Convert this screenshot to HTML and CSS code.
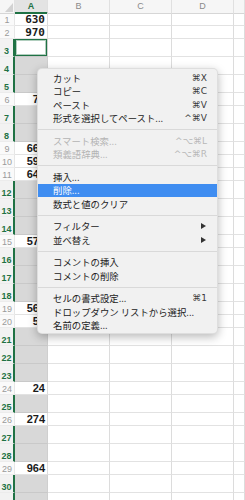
FILE: index.html
```html
<!DOCTYPE html>
<html>
<head>
    <meta charset="utf-8">
    <title>Sheet context menu</title>
    <link rel="stylesheet" href="styles.css">
</head>
<body>
    <div class="sheet">
        <div class="row head">
            <div class="corner"><span class="tri"></span></div>
            <div class="col cur">A</div>
            <div class="col">B</div>
            <div class="col">C</div>
            <div class="col">D</div>
            <div class="col"></div>
        </div>
        <div class="row"><div class="num">1</div><div class="cell mono">630</div><div class="cell"></div><div class="cell"></div><div class="cell"></div><div class="cell"></div></div>
        <div class="row"><div class="num">2</div><div class="cell mono">970</div><div class="cell"></div><div class="cell"></div><div class="cell"></div><div class="cell"></div></div>
        <div class="row sel"><div class="num">3</div><div class="cell active"></div><div class="cell"></div><div class="cell"></div><div class="cell"></div><div class="cell"></div></div>
        <div class="row sel"><div class="num">4</div><div class="cell"></div><div class="cell"></div><div class="cell"></div><div class="cell"></div><div class="cell"></div></div>
        <div class="row sel"><div class="num">5</div><div class="cell"></div><div class="cell"></div><div class="cell"></div><div class="cell"></div><div class="cell"></div></div>
        <div class="row"><div class="num">6</div><div class="cell">73</div><div class="cell"></div><div class="cell"></div><div class="cell"></div><div class="cell"></div></div>
        <div class="row sel"><div class="num">7</div><div class="cell"></div><div class="cell"></div><div class="cell"></div><div class="cell"></div><div class="cell"></div></div>
        <div class="row sel"><div class="num">8</div><div class="cell"></div><div class="cell"></div><div class="cell"></div><div class="cell"></div><div class="cell"></div></div>
        <div class="row"><div class="num">9</div><div class="cell">662</div><div class="cell"></div><div class="cell"></div><div class="cell"></div><div class="cell"></div></div>
        <div class="row"><div class="num">10</div><div class="cell">591</div><div class="cell"></div><div class="cell"></div><div class="cell"></div><div class="cell"></div></div>
        <div class="row"><div class="num">11</div><div class="cell">648</div><div class="cell"></div><div class="cell"></div><div class="cell"></div><div class="cell"></div></div>
        <div class="row sel"><div class="num">12</div><div class="cell"></div><div class="cell"></div><div class="cell"></div><div class="cell"></div><div class="cell"></div></div>
        <div class="row sel"><div class="num">13</div><div class="cell"></div><div class="cell"></div><div class="cell"></div><div class="cell"></div><div class="cell"></div></div>
        <div class="row sel"><div class="num">14</div><div class="cell"></div><div class="cell"></div><div class="cell"></div><div class="cell"></div><div class="cell"></div></div>
        <div class="row"><div class="num">15</div><div class="cell">578</div><div class="cell"></div><div class="cell"></div><div class="cell"></div><div class="cell"></div></div>
        <div class="row sel"><div class="num">16</div><div class="cell"></div><div class="cell"></div><div class="cell"></div><div class="cell"></div><div class="cell"></div></div>
        <div class="row sel"><div class="num">17</div><div class="cell"></div><div class="cell"></div><div class="cell"></div><div class="cell"></div><div class="cell"></div></div>
        <div class="row sel"><div class="num">18</div><div class="cell"></div><div class="cell"></div><div class="cell"></div><div class="cell"></div><div class="cell"></div></div>
        <div class="row"><div class="num">19</div><div class="cell">563</div><div class="cell"></div><div class="cell"></div><div class="cell"></div><div class="cell"></div></div>
        <div class="row"><div class="num">20</div><div class="cell">52</div><div class="cell"></div><div class="cell"></div><div class="cell"></div><div class="cell"></div></div>
        <div class="row sel"><div class="num">21</div><div class="cell"></div><div class="cell"></div><div class="cell"></div><div class="cell"></div><div class="cell"></div></div>
        <div class="row sel"><div class="num">22</div><div class="cell"></div><div class="cell"></div><div class="cell"></div><div class="cell"></div><div class="cell"></div></div>
        <div class="row sel"><div class="num">23</div><div class="cell"></div><div class="cell"></div><div class="cell"></div><div class="cell"></div><div class="cell"></div></div>
        <div class="row"><div class="num">24</div><div class="cell">24</div><div class="cell"></div><div class="cell"></div><div class="cell"></div><div class="cell"></div></div>
        <div class="row sel"><div class="num">25</div><div class="cell"></div><div class="cell"></div><div class="cell"></div><div class="cell"></div><div class="cell"></div></div>
        <div class="row"><div class="num">26</div><div class="cell">274</div><div class="cell"></div><div class="cell"></div><div class="cell"></div><div class="cell"></div></div>
        <div class="row sel"><div class="num">27</div><div class="cell"></div><div class="cell"></div><div class="cell"></div><div class="cell"></div><div class="cell"></div></div>
        <div class="row sel"><div class="num">28</div><div class="cell"></div><div class="cell"></div><div class="cell"></div><div class="cell"></div><div class="cell"></div></div>
        <div class="row"><div class="num">29</div><div class="cell">964</div><div class="cell"></div><div class="cell"></div><div class="cell"></div><div class="cell"></div></div>
        <div class="row sel"><div class="num">30</div><div class="cell"></div><div class="cell"></div><div class="cell"></div><div class="cell"></div><div class="cell"></div></div>
        <div class="row sel"><div class="num"></div><div class="cell"></div><div class="cell"></div><div class="cell"></div><div class="cell"></div><div class="cell"></div></div>
    </div>

    <!-- right-click menu over column A -->
    <div class="menu">
        <div class="item"><span>カット</span><span class="key">⌘X</span></div>
        <div class="item"><span>コピー</span><span class="key">⌘C</span></div>
        <div class="item"><span>ペースト</span><span class="key">⌘V</span></div>
        <div class="item"><span>形式を選択してペースト...</span><span class="key">^⌘V</span></div>
        <div class="sep"></div>
        <div class="item off"><span>スマート検索...</span><span class="key">^⌥⌘L</span></div>
        <div class="item off"><span>類義語辞典...</span><span class="key">^⌥⌘R</span></div>
        <div class="sep"></div>
        <div class="item"><span>挿入...</span></div>
        <div class="item hi"><span>削除...</span></div>
        <div class="item"><span>数式と値のクリア</span></div>
        <div class="sep"></div>
        <div class="item"><span>フィルター</span><span class="arrow"></span></div>
        <div class="item"><span>並べ替え</span><span class="arrow"></span></div>
        <div class="sep"></div>
        <div class="item"><span>コメントの挿入</span></div>
        <div class="item"><span>コメントの削除</span></div>
        <div class="sep"></div>
        <div class="item"><span>セルの書式設定...</span><span class="key">⌘1</span></div>
        <div class="item"><span>ドロップダウン リストから選択...</span></div>
        <div class="item"><span>名前の定義...</span></div>
    </div>
</body>
</html>
```

FILE: styles.css
```css
body { margin: 0; background: #fff; overflow: hidden; font-family: "Liberation Sans", Arial, sans-serif; }
.sheet { width: 245px; }
.row { display: grid; grid-template-columns: 15px 33px 62px 62px 62px 1fr; height: 13px; }
.row.sel { height: 18px; }
.row.head { height: 13px; background: #f6f6f6; }

.corner { position: relative; border-bottom: 1px solid #d6d6d6; border-right: 1px solid #e2e2e2; box-sizing: border-box; }
.tri { position: absolute; right: 1px; bottom: 1px; width: 0; height: 0; border-left: 8px solid transparent; border-bottom: 9px solid #d2d2d2; }
.col { box-sizing: border-box; border-right: 1px solid #e0e0e0; border-bottom: 1px solid #d6d6d6; font-size: 9px; color: #8a8a8a; text-align: center; line-height: 12px; }
.col.cur { background: #e3e3e3; color: #1f7244; font-weight: bold; border-bottom: 2px solid #1f7244; }

.num { box-sizing: border-box; display: flex; align-items: flex-end; justify-content: center; font-size: 9px; line-height: 10px; color: #9a9a9a; border-bottom: 1px solid #ececec; border-right: 1px solid #e6e6e6; background: #fafafa; }
.sel .num { color: #1f7244; font-weight: bold; border-right: 2px solid #1f7244; background: #f2f2f2; }

.cell { box-sizing: border-box; border-right: 1px solid #dcdcdc; border-bottom: 1px solid #e2e2e2; display: flex; align-items: flex-end; justify-content: flex-end; padding-right: 2px; font-size: 11px; line-height: 11px; font-weight: bold; color: #1a1a1a; }
.cell.mono { font-family: "DejaVu Sans Mono", monospace; font-size: 11px; }
.sel .cell:nth-child(2) { background: #d8d8d8; border-bottom-color: #c9c9c9; border-right-color: #cfcfcf; }
.sel .cell.active { background: #fff; box-shadow: inset 0 0 0 1px #1f7244, inset 0 0 0 2px rgba(31, 114, 68, 0.35); }

.menu { position: absolute; left: 37px; top: 68px; width: 181px; padding: 2px 0 1px; background: #f1f1f1; border: 1px solid rgba(0, 0, 0, 0.08); border-radius: 5px; box-sizing: border-box; box-shadow: 0 3px 10px rgba(0, 0, 0, 0.28); font-family: "Noto Sans CJK JP", "DejaVu Sans", sans-serif; font-size: 9.4px; color: #222; }
.item { display: flex; justify-content: space-between; align-items: center; height: 13.5px; padding: 0 10px 0 15px; white-space: nowrap; }
.item.off { color: #b4b4b4; }
.item.hi { background: #3f8df1; color: #fff; }
.key { font-family: "DejaVu Sans", sans-serif; font-size: 9px; color: #3a3a3a; }
.off .key { color: #b8b8b8; }
.arrow { width: 0; height: 0; border-left: 5px solid #333; border-top: 3.5px solid transparent; border-bottom: 3.5px solid transparent; margin-right: 1px; }
.sep { height: 9px; position: relative; }
.sep::after { content: ""; position: absolute; left: 0; right: 0; top: 4px; height: 1px; background: #d9d9d9; }
```
